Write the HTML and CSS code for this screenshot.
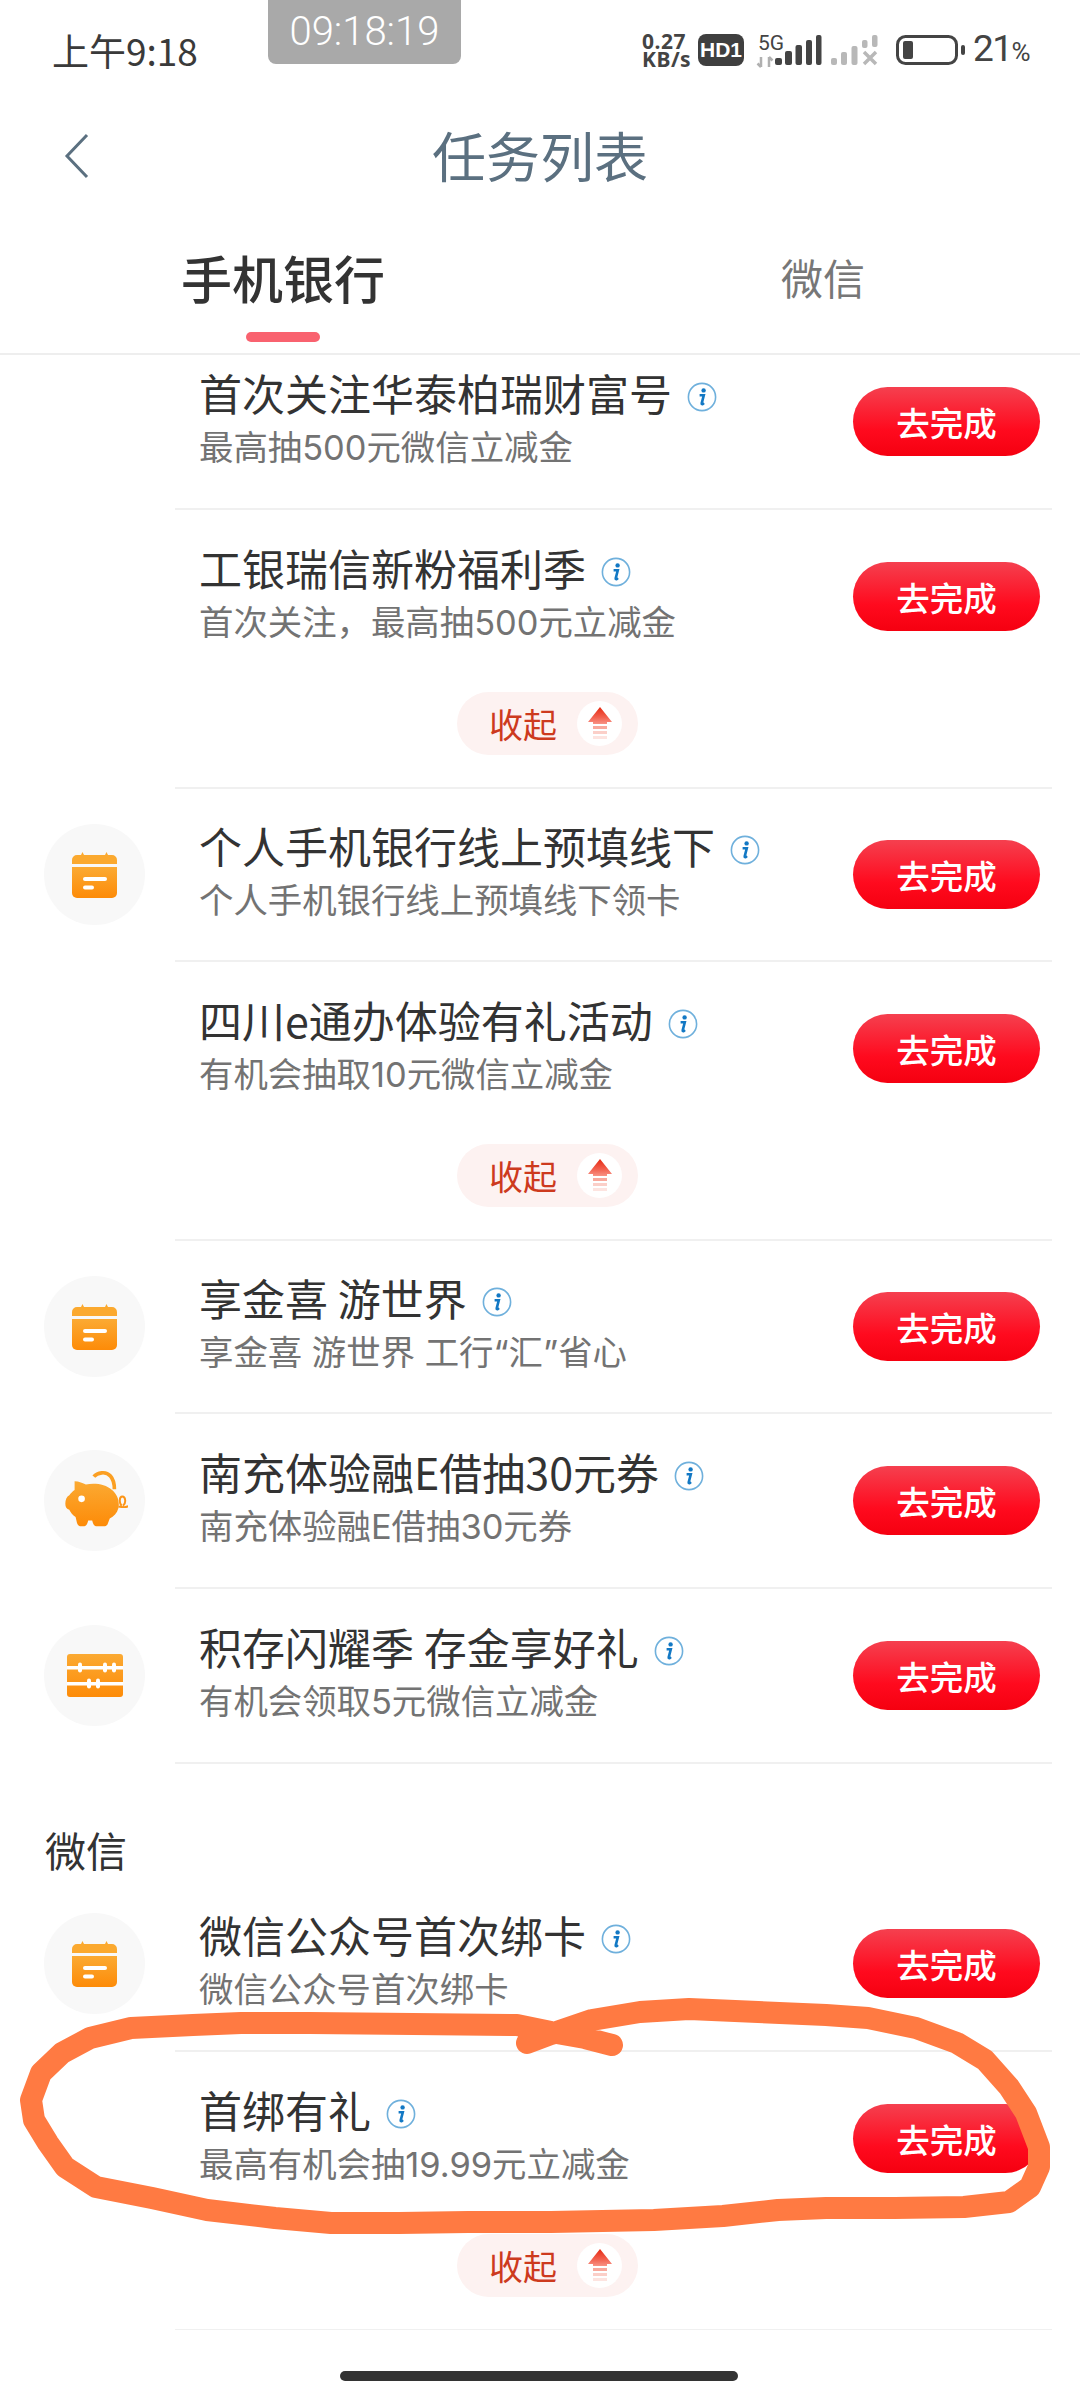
FILE: index.html
```html
<!DOCTYPE html>
<html lang="zh-CN">
<head>
  <meta charset="UTF-8" />
  <meta name="viewport" content="width=device-width, initial-scale=1" />
  <title>任务列表</title>
  <link rel="stylesheet" href="styles.css">
</head>
<body>
  <!-- shared icons -->
  <svg class="defs" width="0" height="0" aria-hidden="true">
    <defs>
      <linearGradient id="orange" x1="0" y1="0" x2="0" y2="1">
        <stop offset="0" stop-color="#fbaa33" />
        <stop offset="1" stop-color="#fd8b08" />
      </linearGradient>
      <linearGradient id="arrowRed" x1="0" y1="0" x2="0" y2="1">
        <stop offset="0" stop-color="#e62a12" />
        <stop offset="0.6" stop-color="#f2604e" />
        <stop offset="1" stop-color="#f89385" />
      </linearGradient>
      <symbol id="info" viewBox="0 0 30 30">
        <circle cx="15" cy="15" r="13.6" fill="#fff" stroke="#6fb0dc" stroke-width="1.6" />
        <circle cx="16.6" cy="8.4" r="2.2" fill="#1278c4" />
        <path d="M12.6 13.2h4.2l-2.1 8.2c-.2.8.5 1 1.1.5l1.2-1" fill="none" stroke="#1278c4" stroke-width="2.6" />
      </symbol>
      <symbol id="calendar" viewBox="0 0 45 46">
        <path d="M0 12V8a5 5 0 0 1 5-5h4l1.500-3 1.500 3h21l1.500-3 1.500 3h4a5 5 0 0 1 5 5v4z" fill="#fba92f" />
        <path d="M0 15h45v26a5 5 0 0 1-5 5H5a5 5 0 0 1-5-5z" fill="url(#orange)" />
        <rect x="11" y="25" width="24" height="4" rx="2" fill="#fff" />
        <rect x="11" y="33.500" width="11" height="4" rx="2" fill="#fff" />
      </symbol>
      <symbol id="pig" viewBox="32 85 200 190">
        <path d="M130 108c10-12 36-18 50-2 9 10 12 24 12 40" fill="none" stroke="#fb9f22" stroke-width="11" />
        <path d="M72 122C85 122 98 128 106 132C130 126 165 130 185 148C203 163 208 185 204 203C200 218 190 228 178 234L172 250C170 256 166 258 160 258H140C133 258 129 254 127 247L125 240H113L111 247C109 254 105 258 98 258H92C85 258 81 254 79 247L75 230C66 224 60 216 56 208C48 206 44 200 44 190C44 178 48 168 56 164C60 158 66 152 72 148Z" fill="url(#orange)" />
        <circle cx="93" cy="175" r="10" fill="#fff" />
        <path d="M204 198c10 2 24 3 30-1M214 196c-8-8-8-28 2-28s12 20 2 28" fill="none" stroke="#fc9518" stroke-width="6" />
      </symbol>
      <symbol id="abacus" viewBox="0 0 56 43">
        <rect width="56" height="43" rx="3" fill="url(#orange)" />
        <rect y="12" width="56" height="3.500" fill="#fff" />
        <rect y="28" width="56" height="3.500" fill="#fff" />
        <rect x="11" y="8.500" width="4" height="10" rx="2" fill="#fff" />
        <rect x="36" y="8.500" width="4" height="10" rx="2" fill="#fff" />
        <rect x="45" y="8.500" width="4" height="10" rx="2" fill="#fff" />
        <rect x="20" y="24.500" width="4" height="10" rx="2" fill="#fff" />
        <rect x="29" y="24.500" width="4" height="10" rx="2" fill="#fff" />
      </symbol>
      <symbol id="upArrow" viewBox="0 0 24 33">
        <path d="M12 0l12 15h-5v2H5v-2H0z" fill="url(#arrowRed)" />
        <rect x="5" y="19" width="14" height="3" fill="#f8a89c" />
        <rect x="5" y="24" width="14" height="3" fill="#fbcfc8" />
        <rect x="5" y="29" width="14" height="3" fill="#fde4e0" />
      </symbol>
    </defs>
  </svg>

  <div class="page">
    <div class="status-bar">
      <span class="clock">上午9:18</span>
      <span class="time-pill">09:18:19</span>
      <div class="status-right">
        <span class="speed">0.27<br>KB/s</span>
        <span class="hd">HD1</span>
        <div class="net">
          <span class="five-g">5G</span>
          <svg class="net-arrows" width="18" height="12" viewBox="0 0 18 12">
            <path d="M5 1v10M1.500 7.500L5 11M13 11V1M13 1l3.500 3.500" stroke="#b0b0b0" stroke-width="2.500" fill="none" />
          </svg>
        </div>
        <svg class="signal" width="105" height="32" viewBox="775 36 105 32">
          <g fill="#444">
            <rect x="775" y="60" width="7" height="7" rx="2" />
            <rect x="785" y="53" width="7" height="14" rx="2" />
            <rect x="795.500" y="47" width="6.500" height="20" rx="2" />
            <rect x="806" y="42" width="6" height="25" rx="2" />
            <rect x="816" y="37" width="5.500" height="30" rx="2" />
          </g>
          <g fill="#b8b8b8">
            <rect x="831" y="60" width="6" height="7" rx="2" />
            <rect x="841" y="54" width="6" height="13" rx="2" />
            <rect x="851.500" y="48" width="6" height="19" rx="2" />
            <rect x="862" y="42" width="5.500" height="8" rx="2" />
            <rect x="872" y="37" width="5.500" height="12" rx="2" />
          </g>
          <path d="M864 54l12 12M876 54l-12 12" stroke="#b8b8b8" stroke-width="3.500" />
        </svg>
        <svg class="battery" width="69" height="30" viewBox="0 0 69 30">
          <rect x="1.500" y="1.500" width="59" height="27" rx="8" fill="none" stroke="#444" stroke-width="3" />
          <rect x="7" y="6" width="10" height="18" rx="2" fill="#444" />
          <rect x="65" y="10" width="4" height="10" rx="2" fill="#444" />
        </svg>
        <span class="percent">21<small>%</small></span>
      </div>
    </div>

    <div class="nav">
      <div class="back">
        <svg width="26" height="46" viewBox="0 0 26 46"><path d="M23 2L3 23l20 21" fill="none" stroke="#5b7080" stroke-width="3" /></svg>
      </div>
      <h1>任务列表</h1>
    </div>

    <div class="tabs">
      <div class="tab active">手机银行<i class="tab-line"></i></div>
      <div class="tab">微信</div>
    </div>

    <div class="list">
      <div class="list-inner">
        <div class="task">
          <div class="task-icon empty"></div>
          <div class="task-body">
            <div class="task-text">
              <div class="task-title">首次关注华泰柏瑞财富号<svg class="info"><use href="#info" /></svg></div>
              <div class="task-sub">最高抽500元微信立减金</div>
            </div>
            <button class="go">去完成</button>
          </div>
        </div>
        <div class="task">
          <div class="task-icon empty"></div>
          <div class="task-body no-line">
            <div class="task-text">
              <div class="task-title">工银瑞信新粉福利季<svg class="info"><use href="#info" /></svg></div>
              <div class="task-sub">首次关注，最高抽500元立减金</div>
            </div>
            <button class="go">去完成</button>
          </div>
        </div>
        <div class="collapse-row">
          <div class="collapse">收起<span class="collapse-arrow"><svg width="24" height="33"><use href="#upArrow" /></svg></span></div>
        </div>

        <div class="task first">
          <div class="task-icon"><svg width="45" height="46"><use href="#calendar" /></svg></div>
          <div class="task-body">
            <div class="task-text">
              <div class="task-title">个人手机银行线上预填线下<svg class="info"><use href="#info" /></svg></div>
              <div class="task-sub">个人手机银行线上预填线下领卡</div>
            </div>
            <button class="go">去完成</button>
          </div>
        </div>
        <div class="task">
          <div class="task-icon empty"></div>
          <div class="task-body no-line">
            <div class="task-text">
              <div class="task-title">四川e通办体验有礼活动<svg class="info"><use href="#info" /></svg></div>
              <div class="task-sub">有机会抽取10元微信立减金</div>
            </div>
            <button class="go">去完成</button>
          </div>
        </div>
        <div class="collapse-row">
          <div class="collapse">收起<span class="collapse-arrow"><svg width="24" height="33"><use href="#upArrow" /></svg></span></div>
        </div>

        <div class="task first">
          <div class="task-icon"><svg width="45" height="46"><use href="#calendar" /></svg></div>
          <div class="task-body">
            <div class="task-text">
              <div class="task-title">享金喜 游世界<svg class="info"><use href="#info" /></svg></div>
              <div class="task-sub">享金喜 游世界 工行“汇”省心</div>
            </div>
            <button class="go">去完成</button>
          </div>
        </div>
        <div class="task">
          <div class="task-icon"><svg width="67" height="63"><use href="#pig" /></svg></div>
          <div class="task-body">
            <div class="task-text">
              <div class="task-title">南充体验融E借抽30元券<svg class="info"><use href="#info" /></svg></div>
              <div class="task-sub">南充体验融E借抽30元券</div>
            </div>
            <button class="go">去完成</button>
          </div>
        </div>
        <div class="task">
          <div class="task-icon"><svg width="56" height="43"><use href="#abacus" /></svg></div>
          <div class="task-body">
            <div class="task-text">
              <div class="task-title">积存闪耀季 存金享好礼<svg class="info"><use href="#info" /></svg></div>
              <div class="task-sub">有机会领取5元微信立减金</div>
            </div>
            <button class="go">去完成</button>
          </div>
        </div>

        <div class="section-label">微信</div>

        <div class="task">
          <div class="task-icon"><svg width="45" height="46"><use href="#calendar" /></svg></div>
          <div class="task-body">
            <div class="task-text">
              <div class="task-title">微信公众号首次绑卡<svg class="info"><use href="#info" /></svg></div>
              <div class="task-sub">微信公众号首次绑卡</div>
            </div>
            <button class="go">去完成</button>
          </div>
        </div>
        <div class="task">
          <div class="task-icon empty"></div>
          <div class="task-body no-line">
            <div class="task-text">
              <div class="task-title">首绑有礼<svg class="info"><use href="#info" /></svg></div>
              <div class="task-sub">最高有机会抽19.99元立减金</div>
            </div>
            <button class="go">去完成</button>
          </div>
        </div>
        <div class="collapse-row">
          <div class="collapse">收起<span class="collapse-arrow"><svg width="24" height="33"><use href="#upArrow" /></svg></span></div>
        </div>
      </div>
    </div>

    <div class="home-bar"></div>

    <!-- hand drawn circle on top of the screenshot -->
    <svg class="scribble" width="1080" height="2400" viewBox="0 0 1080 2400">
      <polyline points="527,2043 551,2034 592,2020 640,2012 689,2009 758,2012 826,2015 868,2018 916,2028 957,2043 985,2060 1009,2087 1026,2113 1039,2147 1039,2167 1030,2187 1009,2202 964,2207 895,2208 826,2208 778,2210 723,2216 654,2220 551,2222 468,2222 399,2223 331,2223 275,2218 207,2210 152,2198 96,2187 65,2167 48,2143 34,2120 31,2100 41,2073 62,2053 90,2038 131,2028 193,2025 241,2023 310,2023 413,2024 517,2025 551,2032 585,2038 612,2045" fill="none" stroke="#ff7a42" stroke-width="22" stroke-linecap="round" stroke-linejoin="round" />
    </svg>
  </div>
</body>
</html>
```

FILE: styles.css
```css
* {
  box-sizing: border-box;
}
html, body {
  margin: 0;
  background: #fff;
}
body {
  font-family: "Noto Sans CJK SC", "Noto Sans", sans-serif;
  color: #333;
}
.defs {
  position: absolute;
}
.page {
  position: relative;
  width: 1080px;
  height: 2400px;
  overflow: hidden;
  background: #fff;
}

/* status bar */
.status-bar {
  display: flex;
  align-items: center;
  height: 100px;
  padding: 0 50px 0 52px;
}
.clock {
  font-size: 37px;
  line-height: 40px;
  color: #3a3a3a;
}
.time-pill {
  align-self: flex-start;
  width: 193px;
  height: 64px;
  margin-left: 70px;
  background: #a9a9a9;
  border-radius: 0 0 8px 8px;
  color: #fff;
  font-family: Roboto, sans-serif;
  font-weight: 300;
  font-size: 40px;
  line-height: 64px;
  text-align: center;
}
.status-right {
  display: flex;
  align-items: center;
  margin-left: auto;
}
.speed {
  width: 50px;
  font-family: "Noto Sans", sans-serif;
  font-weight: 700;
  font-size: 21px;
  letter-spacing: .5px;
  line-height: 18px;
  color: #444;
}
.hd {
  width: 46px;
  height: 32px;
  margin-left: 6px;
  background: #3f3f3f;
  border-radius: 8px;
  color: #fff;
  font-family: "Liberation Sans", sans-serif;
  font-weight: 700;
  font-size: 21px;
  line-height: 32px;
  text-align: center;
}
.net {
  display: flex;
  flex-direction: column;
  width: 20px;
  margin-left: 11px;
  white-space: nowrap;
}
.five-g {
  margin-left: 3px;
  font-family: Roboto, sans-serif;
  font-size: 21px;
  line-height: 20px;
  color: #444;
}
.net-arrows {
  margin-top: 3px;
  margin-left: 1px;
}
.signal {
  display: block;
}
.battery {
  margin-left: 16px;
}
.percent {
  width: 57px;
  margin-left: 8px;
  font-family: Roboto, sans-serif;
  font-size: 37px;
  letter-spacing: -1.5px;
  line-height: 40px;
  white-space: nowrap;
  color: #444;
}
.percent small {
  font-size: 26px;
}

/* title */
.nav {
  display: grid;
  grid-template-columns: 1fr auto 1fr;
  align-items: center;
  height: 110px;
  margin-bottom: 2px;
}
.back {
  display: flex;
  padding-left: 64px;
  margin-top: 2px;
}
.nav h1 {
  margin: 0;
  font-size: 54px;
  font-weight: 400;
  line-height: 64px;
  color: #5b7080;
}

/* tabs */
.tabs {
  display: flex;
  gap: 396px;
  height: 143px;
  padding: 37px 0 0 181px;
  border-bottom: 2px solid #eee;
}
.tab {
  display: flex;
  flex-direction: column;
  align-items: center;
  font-size: 42px;
  line-height: 56px;
  color: #777;
}
.tab.active {
  font-size: 51px;
  font-weight: 500;
  color: #333;
}
.tab-line {
  width: 74px;
  height: 10px;
  margin-top: 27px;
  background: #f9626f;
  border-radius: 5px;
}

/* list */
.list {
  height: 1975px;
  overflow: hidden;
}
.list-inner {
  margin-top: -20px;
}
.task {
  display: flex;
  height: 175px;
}
.task.first {
  height: 173px;
}
.task-icon {
  display: flex;
  flex: none;
  align-self: center;
  align-items: center;
  justify-content: center;
  width: 101px;
  height: 101px;
  margin: 0 30px 2px 44px;
  background: #f8f8f8;
  border-radius: 50%;
}
.task-icon.empty {
  background: none;
}
.task-body {
  display: flex;
  flex: 1;
  align-items: center;
  justify-content: space-between;
  margin-right: 28px;
  padding: 0 12px 0 24px;
  border-bottom: 2px solid #f0f0f0;
}
.task-body.no-line {
  border-bottom-color: transparent;
}
.task-text {
  margin-bottom: 1px;
}
.task-title {
  display: flex;
  align-items: center;
  font-size: 43px;
  line-height: 54px;
  white-space: pre;
  color: #333;
}
.info {
  flex: none;
  width: 30px;
  height: 30px;
  margin: 10px 0 0 15px;
}
.task-sub {
  font-family: Inter, "Noto Sans CJK SC", sans-serif;
  font-size: 34.4px;
  line-height: 58px;
  color: #737373;
}
.go {
  flex: none;
  width: 187px;
  height: 69px;
  padding: 0;
  border: none;
  border-radius: 35px;
  background: linear-gradient(#f5404f, #ff0a1e 62%, #f50010);
  color: #fff;
  font-family: inherit;
  font-size: 33.5px;
  font-weight: 500;
  line-height: 69px;
}

/* collapse button */
.collapse-row {
  margin: 0 28px 0 175px;
  height: 104px;
  padding: 7px 0 0 282px;
  border-bottom: 2px solid #f0f0f0;
}
.collapse {
  display: flex;
  align-items: center;
  width: 181px;
  height: 63px;
  padding-left: 32px;
  background: #fdf2f1;
  border-radius: 32px;
  color: #cd3a1e;
  font-size: 34px;
  line-height: 63px;
}
.collapse-arrow {
  display: flex;
  align-items: center;
  justify-content: center;
  width: 45px;
  height: 45px;
  margin-left: 20px;
  background: #fff;
  border-radius: 50%;
}

.section-label {
  height: 113px;
  padding: 57px 0 0 45px;
  font-size: 41px;
  line-height: 56px;
  color: #333;
}

.home-bar {
  width: 398px;
  height: 10px;
  margin: 41px 0 0 340px;
  background: #333;
  border-radius: 5px;
}

.scribble {
  position: absolute;
  top: 0;
  left: 0;
  pointer-events: none;
}
```
